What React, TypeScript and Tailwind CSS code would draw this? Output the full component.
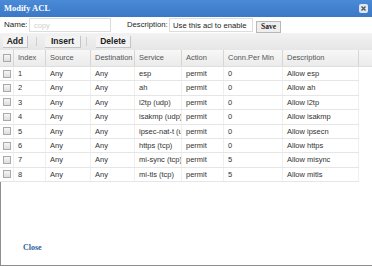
import React from "react";

const rows = [
  { id: 1, service: "esp", conn: "0", desc: "Allow esp" },
  { id: 2, service: "ah", conn: "0", desc: "Allow ah" },
  { id: 3, service: "l2tp (udp)", conn: "0", desc: "Allow l2tp" },
  { id: 4, service: "isakmp (udp)", conn: "0", desc: "Allow isakmp" },
  { id: 5, service: "ipsec-nat-t (udp)", conn: "0", desc: "Allow ipsecn" },
  { id: 6, service: "https (tcp)", conn: "0", desc: "Allow https" },
  { id: 7, service: "mi-sync (tcp)", conn: "5", desc: "Allow misync" },
  { id: 8, service: "mi-tls (tcp)", conn: "5", desc: "Allow mitls" },
];

const cols = [
  { label: "Index", w: "w-[32px]" },
  { label: "Source", w: "w-[45px]" },
  { label: "Destination", w: "w-[44px]" },
  { label: "Service", w: "w-[47px]" },
  { label: "Action", w: "w-[42px]" },
  { label: "Conn.Per Min", w: "w-[59px]" },
  { label: "Description", w: "w-[76px]" },
];

function Checkbox() {
  return (
    <span className="block h-[8px] w-[8px] border border-[#a9a9a9] bg-gradient-to-b from-[#f6f6f6] to-[#dedede]" />
  );
}

function ToolButton({ children, w }: { children: React.ReactNode; w: string }) {
  return (
    <button
      className={`flex h-[12px] ${w} items-center justify-center border-r border-b border-[#c4c4c4] bg-[#f3f3f3] text-[8.5px] font-bold text-[#222]`}
    >
      {children}
    </button>
  );
}

export default function App() {
  const cell = "flex h-full items-center overflow-hidden whitespace-nowrap border-r border-[#efefef] pl-[4px]";
  return (
    <div
      className="flex h-[266px] w-[372px] flex-col overflow-hidden bg-white"
      style={{ fontFamily: '"Liberation Sans", Arial, sans-serif' }}
    >
      <div className="flex h-[17px] shrink-0 items-center justify-between bg-gradient-to-b from-[#4a8ad6] to-[#3b78c6] pl-[4px] pr-[4px]">
        <span
          className="text-[8.5px] font-bold text-white"
          style={{ fontFamily: '"Liberation Serif", "Times New Roman", serif' }}
        >
          Modify ACL
        </span>
        <span className="flex h-[9px] w-[9px] items-center justify-center rounded-[2px] bg-[#dfe7f2]">
          <svg width="7" height="7" viewBox="0 0 7 7">
            <path d="M1.5 1.5 L5.5 5.5 M5.5 1.5 L1.5 5.5" stroke="#4b5563" strokeWidth="1.3" />
          </svg>
        </span>
      </div>

      <div className="flex h-[16px] shrink-0 items-center text-[8px] text-[#222]">
        <span className="ml-[4px] w-[24px]">Name:</span>
        <input
          placeholder="copy"
          className="ml-[1px] h-[14px] w-[82px] border border-[#dcdcdc] px-[4px] text-[7.5px] placeholder:text-[#cfcfcf] outline-none"
        />
        <span className="ml-[16px] w-[42px] text-[7.7px]">Description:</span>
        <input
          defaultValue="Use this acl to enable"
          className="h-[14px] w-[84px] border border-[#dcdcdc] px-[3px] text-[7.7px] text-[#222] outline-none"
        />
        <button
          className="ml-[3px] mt-[3px] flex h-[12px] w-[25px] items-center justify-center border border-[#b8b8b8] bg-[#eeeeee] text-[7.5px] font-bold text-[#222]"
          style={{ fontFamily: '"Liberation Serif", "Times New Roman", serif' }}
        >
          Save
        </button>
      </div>

      <div className="flex h-[17px] shrink-0 items-center bg-gradient-to-b from-[#f2f2f2] to-[#e6e6e6] pl-[3px]">
        <ToolButton w="w-[25px]">Add</ToolButton>
        <span className="mx-[8px] h-[9px] w-px bg-[#cfcfcf]" />
        <ToolButton w="w-[36px]">Insert</ToolButton>
        <span className="mx-[5px] h-[9px] w-px bg-[#cfcfcf]" />
        <span className="ml-[4px]" />
        <ToolButton w="w-[35px]">Delete</ToolButton>
      </div>

      <div className="flex h-[17px] shrink-0 items-center border-b border-[#dedede] bg-gradient-to-b from-[#f7f7f7] to-[#ebebeb] text-[7.5px] text-[#555]">
        <div className="flex h-full w-[14px] items-center justify-center border-r border-[#d6d6d6]">
          <Checkbox />
        </div>
        {cols.map((c) => (
          <div key={c.label} className={`${c.w} flex h-full items-center border-r border-[#d6d6d6] pl-[4px] whitespace-nowrap`}>
            {c.label}
          </div>
        ))}
        <div className="h-full flex-1" />
      </div>

      <div className="w-[359px] text-[7.5px] text-[#333]">
        {rows.map((r) => (
          <div key={r.id} className="flex h-[14.4px] items-center border-b border-[#e6e6e6]">
            <div className="flex h-full w-[14px] items-center justify-center border-r border-[#efefef]">
              <Checkbox />
            </div>
            <div className={`${cell} w-[32px]`}>{r.id}</div>
            <div className={`${cell} w-[45px]`}>Any</div>
            <div className={`${cell} w-[44px]`}>Any</div>
            <div className={`${cell} w-[47px]`}>
              <span className="block w-[42px] overflow-hidden">{r.service}</span>
            </div>
            <div className={`${cell} w-[42px]`}>permit</div>
            <div className={`${cell} w-[59px]`}>{r.conn}</div>
            <div className={`${cell} w-[76px]`}>{r.desc}</div>
          </div>
        ))}
      </div>

      <div className="flex flex-1 items-end border-b border-l border-[#8e8e8e] pb-[11px] pl-[22px]">
        <a
          className="text-[8px] font-bold text-[#2f5f9e]"
          style={{ fontFamily: '"Liberation Serif", "Times New Roman", serif' }}
        >
          Close
        </a>
      </div>
    </div>
  );
}
